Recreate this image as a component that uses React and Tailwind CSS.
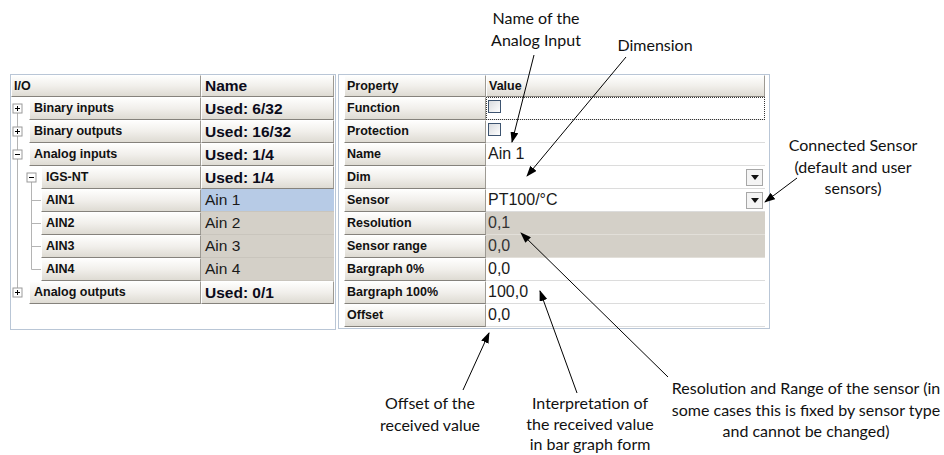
import React from 'react';

const ui = { fontFamily: '"Liberation Sans", Arial, sans-serif' };
const note = { fontFamily: 'Lato, "Open Sans", sans-serif' };

const tree = [
  { level: 0, sign: '+', label: 'Binary inputs', used: 'Used: 6/32', lines: 'first' },
  { level: 0, sign: '+', label: 'Binary outputs', used: 'Used: 16/32', lines: 'mid' },
  { level: 0, sign: '-', label: 'Analog inputs', used: 'Used: 1/4', lines: 'mid' },
  { level: 1, sign: '-', label: 'IGS-NT', used: 'Used: 1/4', lines: 'parent' },
  { level: 2, label: 'AIN1', value: 'Ain 1', selected: true, lines: 'child' },
  { level: 2, label: 'AIN2', value: 'Ain 2', lines: 'child' },
  { level: 2, label: 'AIN3', value: 'Ain 3', lines: 'child' },
  { level: 2, label: 'AIN4', value: 'Ain 4', lines: 'lastchild' },
  { level: 0, sign: '+', label: 'Analog outputs', used: 'Used: 0/1', lines: 'last' },
];

const props = [
  { name: 'Function', check: true, focus: true },
  { name: 'Protection', check: true },
  { name: 'Name', value: 'Ain 1' },
  { name: 'Dim', value: '', drop: true },
  { name: 'Sensor', value: 'PT100/°C', drop: true },
  { name: 'Resolution', value: '0,1', gray: true },
  { name: 'Sensor range', value: '0,0', gray: true },
  { name: 'Bargraph 0%', value: '0,0' },
  { name: 'Bargraph 100%', value: '100,0' },
  { name: 'Offset', value: '0,0' },
];

const Btn = ({ children, className = '' }) => (
  <div
    className={`flex items-center h-full bg-linear-to-b from-[#fefefd] via-[#f1efeb] to-[#dedbd3] border-t border-l border-white border-r border-r-[#9d9a93] border-b border-b-[#85827c] ${className}`}
  >
    {children}
  </div>
);

const Box = ({ x, sign }) => (
  <g>
    <rect x={x - 4} y={7} width={9} height={9} fill="#fff" stroke="#9a9a9a" />
    <line x1={x - 2} y1={11.5} x2={x + 3} y2={11.5} stroke="#000" />
    {sign === '+' && <line x1={x + 0.5} y1={9} x2={x + 0.5} y2={14} stroke="#000" />}
  </g>
);

const TreeLines = ({ row }) => {
  const c = '#b4b4b4';
  const w = row.level === 0 ? 18 : 30;
  const a = 6.5;
  const b = 20.5;
  return (
    <svg width={w} height={23} className="shrink-0 block">
      {row.lines === 'first' && <line x1={a} y1={11.5} x2={a} y2={23} stroke={c} />}
      {row.lines === 'last' && <line x1={a} y1={0} x2={a} y2={11.5} stroke={c} />}
      {['mid', 'parent', 'child', 'lastchild'].includes(row.lines) && (
        <line x1={a} y1={0} x2={a} y2={23} stroke={c} />
      )}
      {row.lines === 'parent' && <line x1={b} y1={11.5} x2={b} y2={23} stroke={c} />}
      {row.lines === 'child' && <line x1={b} y1={0} x2={b} y2={23} stroke={c} />}
      {row.lines === 'lastchild' && <line x1={b} y1={0} x2={b} y2={11.5} stroke={c} />}
      {(row.lines === 'child' || row.lines === 'lastchild') && (
        <line x1={b} y1={11.5} x2={30} y2={11.5} stroke={c} />
      )}
      {row.sign && <Box x={row.level === 0 ? a - 0.5 : b - 0.5} sign={row.sign} />}
    </svg>
  );
};

const Check = () => (
  <div className="w-[13px] h-[13px] border border-[#3d5470] bg-linear-to-br from-[#d9dbde] to-white mt-[-4px]" />
);

const Drop = () => (
  <div className="ml-auto mr-[2px] w-[17px] h-[17px] border border-[#a7a7a7] bg-[#f4f4f4] flex items-center justify-center">
    <svg width="8" height="5">
      <polygon points="0,0 8,0 4,5" fill="#111" />
    </svg>
  </div>
);

const IoPanel = () => (
  <div className="w-[326px] h-[256px] border border-[#b9c6d6] bg-white shrink-0" style={ui}>
    <div className="flex h-[22px]">
      <Btn className="w-[190px] pl-[2px] text-[12.5px] font-bold text-[#111]">I/O</Btn>
      <Btn className="w-[133px] pl-[3px] text-[15.5px] font-bold text-[#0b0b1a]">Name</Btn>
    </div>
    {tree.map((row) => (
      <div key={row.label} className="flex h-[23px]">
        <TreeLines row={row} />
        <Btn
          className={`${row.level === 0 ? 'w-[172px]' : 'w-[160px]'} pl-[4px] text-[12.5px] font-bold text-[#111]`}
        >
          {row.label}
        </Btn>
        {row.used ? (
          <Btn className="w-[133px] pl-[3px] text-[15.5px] font-bold text-[#0b0b1a]">{row.used}</Btn>
        ) : (
          <div
            className={`w-[133px] h-full flex items-center pl-[4px] text-[15.5px] text-[#1a1a1a] border-b border-[#c9c5bd] ${
              row.selected ? 'bg-[#b7cbe6]' : 'bg-[#d4d0c8]'
            }`}
          >
            {row.value}
          </div>
        )}
      </div>
    ))}
  </div>
);

const PropPanel = () => (
  <div className="w-[432px] h-[255px] border border-[#b9c6d6] bg-white shrink-0 pl-[5px]" style={ui}>
    <div className="flex h-[22px]">
      <Btn className="w-[142px] pl-[2px] text-[12.5px] font-bold text-[#111]">Property</Btn>
      <Btn className="w-[279px] pl-[2px] text-[12.5px] font-bold text-[#111]">Value</Btn>
    </div>
    {props.map((p) => (
      <div key={p.name} className="flex h-[23px]">
        <Btn className="w-[142px] pl-[2px] text-[12.5px] font-bold text-[#111]">{p.name}</Btn>
        <div
          className={`w-[279px] h-full flex items-center pl-[2px] text-[16px] border-b ${
            p.gray ? 'bg-[#d4d0c8] border-[#e2dfd9] text-[#333]' : 'bg-white border-[#dcdcdc] text-[#1a1a1a]'
          } ${p.focus ? 'outline-1 outline-dotted outline-[#333] outline-offset-[-1px]' : ''}`}
        >
          {p.check ? <Check /> : p.value}
          {p.drop && <Drop />}
        </div>
      </div>
    ))}
  </div>
);

const arrows = [
  [534, 55, 512, 142],
  [626, 57, 527, 176],
  [797, 178, 765, 202],
  [668, 377, 521, 233],
  [577, 393, 540, 291],
  [463, 390, 489, 333],
];

const Arrows = () => (
  <svg className="absolute inset-0 pointer-events-none" width="944" height="455">
    <defs>
      <marker id="head" markerWidth="11" markerHeight="8" refX="10" refY="4" orient="auto" markerUnits="userSpaceOnUse">
        <polygon points="0,0 11,4 0,8" fill="#000" />
      </marker>
    </defs>
    {arrows.map(([x1, y1, x2, y2], i) => (
      <line key={i} x1={x1} y1={y1} x2={x2} y2={y2} stroke="#000" strokeWidth="1" markerEnd="url(#head)" />
    ))}
  </svg>
);

const Note = ({ className, children }) => (
  <div className={`absolute text-center text-[16px] text-[#111] whitespace-nowrap ${className}`} style={note}>
    {children}
  </div>
);

export default function App() {
  return (
    <div className="relative w-[944px] h-[455px] bg-white overflow-hidden">
      <div className="flex gap-[2px] pt-[74px] pl-[10px]">
        <IoPanel />
        <PropPanel />
      </div>

      <Arrows />

      <Note className="left-[486px] top-[7px] w-[100px] leading-[21.5px]">
        Name of the
        <br />
        Analog Input
      </Note>
      <Note className="left-[605px] top-[34px] w-[100px] leading-[21.5px]">Dimension</Note>
      <Note className="left-[773px] top-[134px] w-[160px] leading-[21.5px]">
        Connected Sensor
        <br />
        (default and user
        <br />
        sensors)
      </Note>
      <Note className="left-[370px] top-[392px] w-[120px] leading-[21.5px]">
        Offset of the
        <br />
        received value
      </Note>
      <Note className="left-[520px] top-[393px] w-[140px] leading-[20.5px]">
        Interpretation of
        <br />
        the received value
        <br />
        in bar graph form
      </Note>
      <Note className="left-[661px] top-[377px] w-[290px] leading-[21.5px]">
        Resolution and Range of the sensor (in
        <br />
        some cases this is fixed by sensor type
        <br />
        and cannot be changed)
      </Note>
    </div>
  );
}
